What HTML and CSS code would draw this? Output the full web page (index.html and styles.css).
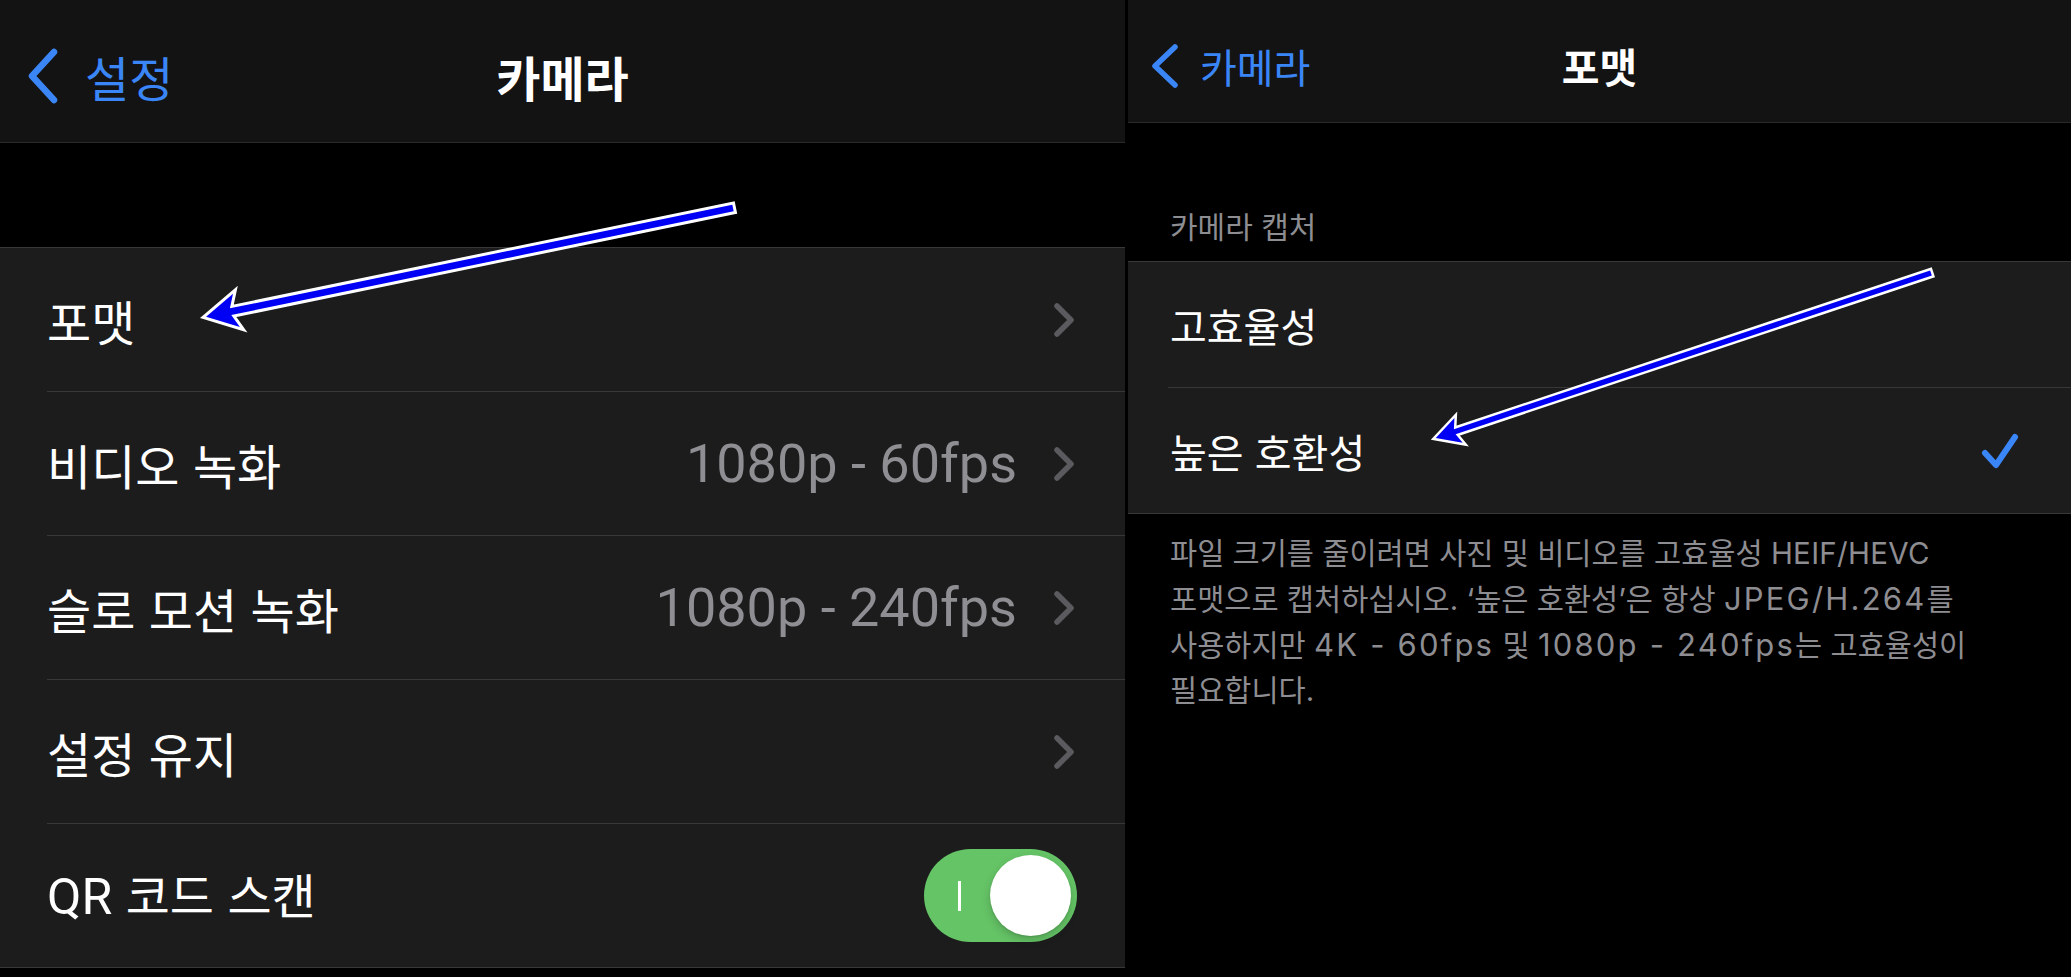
FILE: index.html
```
<!DOCTYPE html>
<html lang="ko">
<head>
<meta charset="utf-8">
<title>카메라 설정</title>
<link rel="stylesheet" href="styles.css">
</head>
<body>
<div class="screen">
  <section class="panel panel-left">
    <header class="nav nav-lg">
      <div class="back">
        <svg class="back-chev" viewBox="0 0 32 56" width="32" height="56"><path d="M27 4 L5 28 L27 52" fill="none" stroke="currentColor" stroke-width="6.5" stroke-linecap="round" stroke-linejoin="round"/></svg>
        <span class="back-text">설정</span>
      </div>
      <h1 class="nav-title">카메라</h1>
      <div class="nav-side"></div>
    </header>
    <div class="spacer"></div>
    <ul class="group group-lg">
      <li class="row"><div class="row-inner"><span class="label">포맷</span><span class="accessory"><svg class="chev" viewBox="0 0 24 36" width="24" height="36"><path d="M5 4 L19 18 L5 32" fill="none" stroke="currentColor" stroke-width="5.5" stroke-linecap="round" stroke-linejoin="round"/></svg></span></div></li>
      <li class="row"><div class="row-inner"><span class="label">비디오 녹화</span><span class="accessory"><span class="value">1080p - 60fps</span><svg class="chev" viewBox="0 0 24 36" width="24" height="36"><path d="M5 4 L19 18 L5 32" fill="none" stroke="currentColor" stroke-width="5.5" stroke-linecap="round" stroke-linejoin="round"/></svg></span></div></li>
      <li class="row"><div class="row-inner"><span class="label">슬로 모션 녹화</span><span class="accessory"><span class="value">1080p - 240fps</span><svg class="chev" viewBox="0 0 24 36" width="24" height="36"><path d="M5 4 L19 18 L5 32" fill="none" stroke="currentColor" stroke-width="5.5" stroke-linecap="round" stroke-linejoin="round"/></svg></span></div></li>
      <li class="row"><div class="row-inner"><span class="label">설정 유지</span><span class="accessory"><svg class="chev" viewBox="0 0 24 36" width="24" height="36"><path d="M5 4 L19 18 L5 32" fill="none" stroke="currentColor" stroke-width="5.5" stroke-linecap="round" stroke-linejoin="round"/></svg></span></div></li>
      <li class="row"><div class="row-inner"><span class="label"><span class="latin">QR</span> 코드 스캔</span><span class="accessory toggle-wrap"><span class="toggle"><span class="toggle-mark"></span><span class="toggle-knob"></span></span></span></div></li>
    </ul>
  </section>

  <section class="panel panel-right">
    <header class="nav nav-sm">
      <div class="back">
        <svg class="back-chev-sm" viewBox="0 0 29 46" width="29" height="46"><path d="M25 4 L5 23 L25 42" fill="none" stroke="currentColor" stroke-width="5.5" stroke-linecap="round" stroke-linejoin="round"/></svg>
        <span class="back-text-sm">카메라</span>
      </div>
      <h1 class="nav-title-sm">포맷</h1>
      <div class="nav-side"></div>
    </header>
    <div class="section-header">카메라 캡처</div>
    <ul class="group group-sm">
      <li class="row-sm"><div class="row-inner-sm"><span class="label-sm">고효율성</span></div></li>
      <li class="row-sm"><div class="row-inner-sm"><span class="label-sm">높은 호환성</span><svg class="check" viewBox="0 0 40 40" width="40" height="40"><path d="M5 21 L16 33 L35 5" fill="none" stroke="currentColor" stroke-width="6" stroke-linecap="round" stroke-linejoin="round"/></svg></div></li>
    </ul>
    <p class="footer">파일 크기를 줄이려면 사진 및 비디오를 고효율성 <span class="caps">HEIF/HEVC</span><br>포맷으로 캡처하십시오. ‘높은 호환성’은 항상 <span class="lt">JPEG/H.264</span>를<br>사용하지만 <span class="lt">4K - 60fps</span> 및 <span class="lt">1080p - 240fps</span>는 고효율성이<br>필요합니다.</p>
  </section>

  <svg class="annotations" viewBox="0 0 2071 977" width="2071" height="977">
    <g transform="translate(733 208) rotate(168.34)">
      <polygon class="arrow" points="0,-3.4 513,-3.4 507,-17 538,0 507,17 513,3.4 0,3.4" stroke-width="6"/>
    </g>
    <g transform="translate(1931 273) rotate(161.57)">
      <polygon class="arrow" points="0,-2.7 502,-2.7 498,-13 522,0 498,13 502,2.7 0,2.7" stroke-width="5"/>
    </g>
  </svg>
</div>
</body>
</html>
```

FILE: styles.css
```
* { box-sizing: border-box; }
html, body { margin: 0; padding: 0; background: #000; }
body { font-family: "Noto Sans CJK KR", "Noto Sans", sans-serif; color: #fff; }

.screen {
  position: relative;
  width: 2071px;
  height: 977px;
  display: flex;
  gap: 3px;
  background: #000;
  overflow: hidden;
}

.panel { display: flex; flex-direction: column; }
.panel-left { width: 1125px; flex: none; }
.panel-right { flex: 1; }

/* nav bars */
.nav {
  display: grid;
  grid-template-columns: 1fr auto 1fr;
  align-items: center;
  background: #131313;
  border-bottom: 1px solid #2a2a2c;
}
.nav-lg { height: 143px; padding-top: 10px; }
.nav-sm { height: 123px; padding-top: 9px; }

.back { display: flex; align-items: center; color: #3b86f7; }
.nav-lg .back { padding-left: 27px; gap: 26px; }
.nav-sm .back { padding-left: 22px; gap: 21px; }
.back-chev, .back-chev-sm { display: block; flex: none; }
.back-text { font-size: 48px; line-height: 1; }
.back-text-sm { font-size: 40px; line-height: 1; }

.nav-title, .nav-title-sm { margin: 0; font-weight: 700; line-height: 1; color: #fff; }
.nav-title { font-size: 48px; }
.nav-title-sm { font-size: 41px; }

.spacer { height: 104px; }

/* grouped lists */
.group {
  list-style: none;
  margin: 0;
  padding: 0;
  background: #1c1c1d;
  border-top: 1px solid #38383a;
  border-bottom: 1px solid #38383a;
}

.row { padding-left: 47px; }
.row-inner {
  height: 144px;
  display: flex;
  align-items: center;
  justify-content: space-between;
  padding-right: 49px;
  border-bottom: 1px solid #38383a;
}
.row:last-child .row-inner { border-bottom: none; height: 143px; }

.label { font-size: 48px; line-height: 1; color: #fff; }
.latin { font-family: "Roboto", "Noto Sans", sans-serif; font-size: 50px; }

.accessory { display: flex; align-items: center; color: #5b5b5f; }
.value {
  font-family: "Roboto", "Noto Sans", sans-serif;
  font-size: 54px;
  line-height: 1;
  color: #8e8e93;
  margin-right: 35px;
}
.chev { display: block; }

.toggle-wrap { margin-right: -1px; }
.toggle {
  position: relative;
  display: block;
  width: 153px;
  height: 93px;
  border-radius: 47px;
  background: #65c466;
}
.toggle-mark {
  position: absolute;
  left: 34px;
  top: 32px;
  width: 3px;
  height: 30px;
  background: #fff;
}
.toggle-knob {
  position: absolute;
  right: 6px;
  top: 6px;
  width: 81px;
  height: 81px;
  border-radius: 50%;
  background: #fff;
  box-shadow: 0 4px 10px rgba(0, 0, 0, 0.18), 0 1px 2px rgba(0, 0, 0, 0.12);
}

/* right panel */
.section-header {
  height: 138px;
  display: flex;
  align-items: flex-end;
  padding: 0 0 19px 42px;
  font-size: 30px;
  line-height: 34px;
  color: #8d8d92;
}

.row-sm { padding-left: 40px; }
.row-inner-sm {
  height: 126px;
  display: flex;
  align-items: center;
  justify-content: space-between;
  padding-right: 51px;
  border-bottom: 1px solid #38383a;
}
.row-sm:last-child .row-inner-sm { border-bottom: none; height: 125px; }
.label-sm { font-size: 40px; line-height: 1; color: #fff; padding-left: 2px; }
.check { display: block; color: #3b86f7; margin-top: 2px; }

.footer {
  margin: 0;
  padding: 17px 0 0 42px;
  font-family: "Inter", "Noto Sans CJK KR", sans-serif;
  font-size: 29.5px;
  line-height: 45px;
  color: #8d8d92;
  white-space: nowrap;
}
.caps { letter-spacing: 0.3px; }
.lt { font-size: 31px; letter-spacing: 2.2px; }

/* annotation overlay */
.annotations {
  position: absolute;
  left: 0;
  top: 0;
  pointer-events: none;
}
.arrow {
  fill: #0000f5;
  stroke: #fff;
  stroke-linejoin: miter;
  stroke-miterlimit: 6;
  paint-order: stroke fill;
}
```
